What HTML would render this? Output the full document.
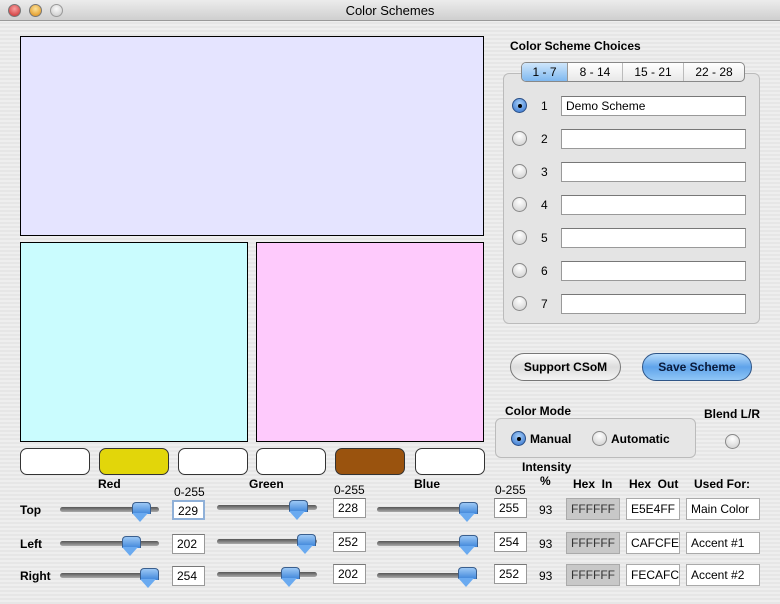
<!DOCTYPE html>
<html><head><meta charset="utf-8">
<style>
*{box-sizing:border-box;margin:0;padding:0}
body{width:780px;height:604px;overflow:hidden;font-family:"Liberation Sans",sans-serif;font-size:12px;color:#000;
background:repeating-linear-gradient(#eeeeee 0,#eeeeee 2px,#e6e6e6 2px,#e6e6e6 4px);position:relative}
.a{position:absolute}
.tb{left:0;top:0;width:780px;height:21px;background:linear-gradient(#ececec,#cfcfcf);border-bottom:1px solid #999;text-align:center;font-size:13px;line-height:21px}
.lt{width:13px;height:13px;border-radius:50%;top:4px;border:1px solid #777}
.box{border:1px solid #000}
.sw{height:27px;border:1px solid #333;border-radius:7px;background:#fff;top:448px}
.b{font-weight:bold}
.tf{height:20px;background:#fff;border:1px solid #999;border-top-color:#777;font-size:12px;line-height:18px;padding-left:4px}
.trk{height:5px;border-radius:3px;background:linear-gradient(#555,#aaa);}
.th{width:17px;height:20px;}
.th:before{content:"";position:absolute;left:0;top:0;width:17px;height:11px;background:linear-gradient(#9cc8f5,#3f86da);border:1px solid #3a5f8e;border-radius:4px 4px 0 0;border-bottom:none}
.th:after{content:"";position:absolute;left:0;top:11px;width:0;height:0;border-left:8.5px solid transparent;border-right:8.5px solid transparent;border-top:9px solid #6aaaf0}
.rd{width:15px;height:15px;border-radius:50%;border:1px solid #888;background:radial-gradient(circle at 50% 30%,#fff,#ccc)}
.rd.on{background:radial-gradient(circle at 50% 35%,#a8d0f8,#2f6fcc);border-color:#2a4f86}
.rd.on:after{content:"";position:absolute;left:4.5px;top:4.5px;width:4px;height:4px;border-radius:50%;background:#000}
.num{font-size:12px}
.hx{height:22px;border:1px solid #aaa;font-size:12px;line-height:20px;padding-left:4px;background:#fff}
</style></head><body>
<div class="a tb">Color Schemes</div>
<div class="a lt" style="left:8px;background:radial-gradient(circle at 50% 35%,#f9a0a0,#c8282a)"></div>
<div class="a lt" style="left:29px;background:radial-gradient(circle at 50% 35%,#fde39a,#dc8a10)"></div>
<div class="a lt" style="left:50px;background:radial-gradient(circle at 50% 35%,#fafafa,#c4c4c4);border-color:#999"></div>

<div class="a box" style="left:20px;top:36px;width:464px;height:200px;background:#e5e4ff"></div>
<div class="a box" style="left:20px;top:242px;width:228px;height:200px;background:#cafcfe"></div>
<div class="a box" style="left:256px;top:242px;width:228px;height:200px;background:#fecafc"></div>

<div class="a sw" style="left:20px;width:70px"></div>
<div class="a sw" style="left:99px;width:70px;background:#e2d60a"></div>
<div class="a sw" style="left:178px;width:70px"></div>
<div class="a sw" style="left:256px;width:70px"></div>
<div class="a sw" style="left:335px;width:70px;background:#9a530e"></div>
<div class="a sw" style="left:415px;width:70px"></div>

<div class="a b" style="left:98px;top:477px">Red</div>
<div class="a b" style="left:249px;top:477px">Green</div>
<div class="a b" style="left:414px;top:477px">Blue</div>
<div class="a" style="left:174px;top:485px">0-255</div>
<div class="a" style="left:334px;top:483px">0-255</div>
<div class="a" style="left:495px;top:483px">0-255</div>

<div class="a b" style="left:20px;top:503px">Top</div>
<div class="a b" style="left:20px;top:537px">Left</div>
<div class="a b" style="left:20px;top:569px">Right</div>

<!-- sliders -->
<div class="a trk" style="left:60px;top:507px;width:99px"></div>
<div class="a trk" style="left:60px;top:541px;width:99px"></div>
<div class="a trk" style="left:60px;top:573px;width:99px"></div>
<div class="a trk" style="left:217px;top:505px;width:100px"></div>
<div class="a trk" style="left:217px;top:539px;width:100px"></div>
<div class="a trk" style="left:217px;top:572px;width:100px"></div>
<div class="a trk" style="left:377px;top:507px;width:100px"></div>
<div class="a trk" style="left:377px;top:541px;width:100px"></div>
<div class="a trk" style="left:377px;top:573px;width:100px"></div>

<div class="a th" style="left:132px;top:502px"></div>
<div class="a th" style="left:122px;top:536px"></div>
<div class="a th" style="left:140px;top:568px"></div>
<div class="a th" style="left:289px;top:500px"></div>
<div class="a th" style="left:297px;top:534px"></div>
<div class="a th" style="left:281px;top:567px"></div>
<div class="a th" style="left:459px;top:502px"></div>
<div class="a th" style="left:459px;top:535px"></div>
<div class="a th" style="left:458px;top:567px"></div>

<div class="a tf" style="left:172px;top:500px;width:33px;border:2px solid #8fb0d8">229</div>
<div class="a tf" style="left:172px;top:534px;width:33px">202</div>
<div class="a tf" style="left:172px;top:566px;width:33px">254</div>
<div class="a tf" style="left:333px;top:498px;width:33px">228</div>
<div class="a tf" style="left:333px;top:532px;width:33px">252</div>
<div class="a tf" style="left:333px;top:564px;width:33px">202</div>
<div class="a tf" style="left:494px;top:498px;width:33px">255</div>
<div class="a tf" style="left:494px;top:532px;width:33px">254</div>
<div class="a tf" style="left:494px;top:564px;width:33px">252</div>

<div class="a b" style="left:522px;top:460px">Intensity</div>
<div class="a b" style="left:540px;top:474px">%</div>
<div class="a b" style="left:573px;top:477px">Hex&nbsp; In</div>
<div class="a b" style="left:629px;top:477px">Hex&nbsp; Out</div>
<div class="a b" style="left:694px;top:477px">Used For:</div>
<div class="a" style="left:539px;top:503px">93</div>
<div class="a" style="left:539px;top:537px">93</div>
<div class="a" style="left:539px;top:569px">93</div>
<div class="a hx" style="left:566px;top:498px;width:54px;background:#c8c8c8;color:#333">FFFFFF</div>
<div class="a hx" style="left:566px;top:532px;width:54px;background:#c8c8c8;color:#333">FFFFFF</div>
<div class="a hx" style="left:566px;top:564px;width:54px;background:#c8c8c8;color:#333">FFFFFF</div>
<div class="a hx" style="left:626px;top:498px;width:54px">E5E4FF</div>
<div class="a hx" style="left:626px;top:532px;width:54px">CAFCFE</div>
<div class="a hx" style="left:626px;top:564px;width:54px">FECAFC</div>
<div class="a hx" style="left:686px;top:498px;width:74px">Main Color</div>
<div class="a hx" style="left:686px;top:532px;width:74px">Accent #1</div>
<div class="a hx" style="left:686px;top:564px;width:74px">Accent #2</div>

<!-- right panel -->
<div class="a b" style="left:510px;top:39px">Color Scheme Choices</div>
<div class="a" style="left:503px;top:73px;width:257px;height:251px;border:1px solid #bbb;border-radius:6px;background:#e4e4e4"></div>
<div class="a" style="left:521px;top:62px;width:224px;height:20px;border:1px solid #888;border-radius:5px;background:linear-gradient(#fff,#e8e8e8);display:flex;font-size:12px;line-height:18px;overflow:hidden">
<div style="width:46px;text-align:center;background:linear-gradient(#cfe6fb,#7fb8f0);border-right:1px solid #999">1 - 7</div>
<div style="width:55px;text-align:center;border-right:1px solid #bbb">8 - 14</div>
<div style="width:61px;text-align:center;border-right:1px solid #bbb">15 - 21</div>
<div style="flex:1;text-align:center">22 - 28</div></div>

<div class="a rd on" style="left:512px;top:98px"></div>
<div class="a rd" style="left:512px;top:131px"></div>
<div class="a rd" style="left:512px;top:164px"></div>
<div class="a rd" style="left:512px;top:197px"></div>
<div class="a rd" style="left:512px;top:230px"></div>
<div class="a rd" style="left:512px;top:263px"></div>
<div class="a rd" style="left:512px;top:296px"></div>
<div class="a num" style="left:541px;top:99px">1</div>
<div class="a num" style="left:541px;top:132px">2</div>
<div class="a num" style="left:541px;top:165px">3</div>
<div class="a num" style="left:541px;top:198px">4</div>
<div class="a num" style="left:541px;top:231px">5</div>
<div class="a num" style="left:541px;top:264px">6</div>
<div class="a num" style="left:541px;top:297px">7</div>
<div class="a tf" style="left:561px;top:96px;width:185px">Demo Scheme</div>
<div class="a tf" style="left:561px;top:129px;width:185px"></div>
<div class="a tf" style="left:561px;top:162px;width:185px"></div>
<div class="a tf" style="left:561px;top:195px;width:185px"></div>
<div class="a tf" style="left:561px;top:228px;width:185px"></div>
<div class="a tf" style="left:561px;top:261px;width:185px"></div>
<div class="a tf" style="left:561px;top:294px;width:185px"></div>

<div class="a b" style="left:510px;top:353px;width:111px;height:28px;border:1px solid #777;border-radius:14px;background:linear-gradient(#fdfdfd,#dcdcdc 50%,#f4f4f4);text-align:center;line-height:26px">Support CSoM</div>
<div class="a b" style="left:642px;top:353px;width:110px;height:28px;border:1px solid #2f5587;border-radius:14px;background:linear-gradient(#b7dcfb,#5fa3ea 50%,#8fc6f6);text-align:center;line-height:26px;color:#0a1a3a">Save Scheme</div>

<div class="a b" style="left:505px;top:404px">Color Mode</div>
<div class="a" style="left:495px;top:418px;width:201px;height:40px;border:1px solid #bbb;border-radius:6px;background:#e6e6e6"></div>
<div class="a rd on" style="left:511px;top:431px"></div>
<div class="a b" style="left:530px;top:432px">Manual</div>
<div class="a rd" style="left:592px;top:431px"></div>
<div class="a b" style="left:611px;top:432px">Automatic</div>
<div class="a b" style="left:704px;top:407px">Blend L/R</div>
<div class="a rd" style="left:725px;top:434px"></div>
</body></html>
